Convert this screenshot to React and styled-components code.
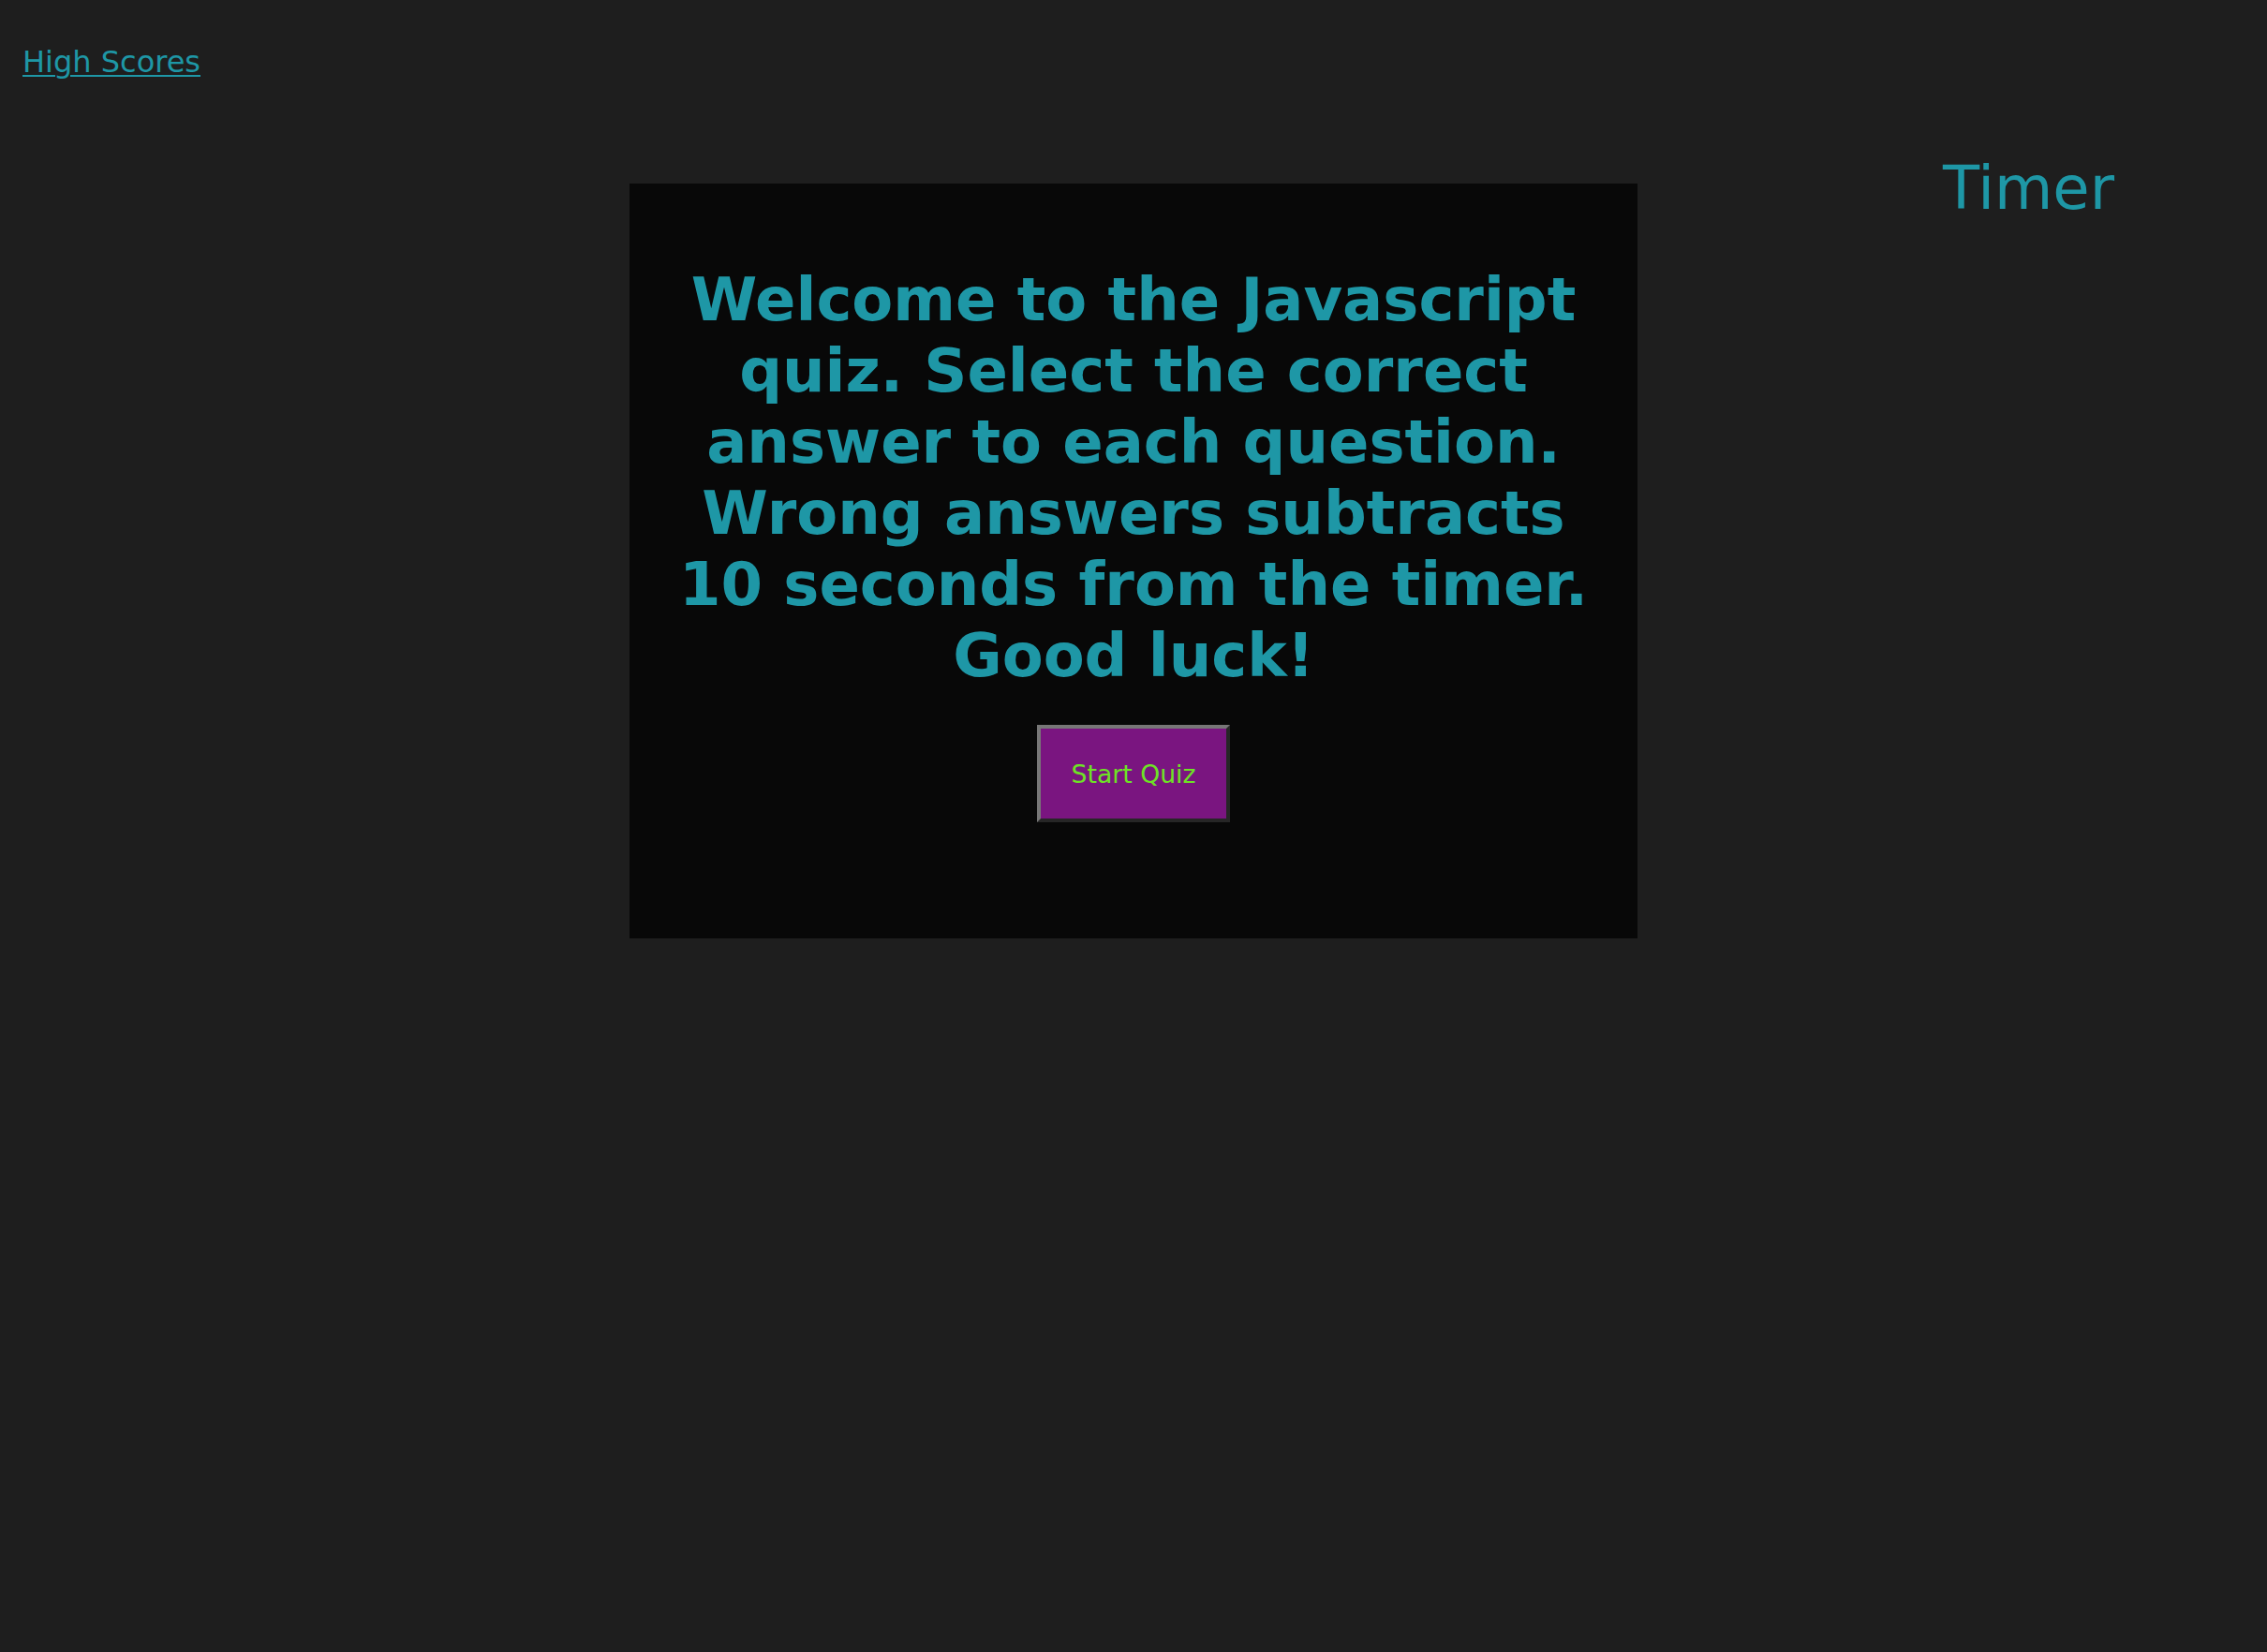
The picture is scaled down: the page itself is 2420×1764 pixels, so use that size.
import React from "react";
import styled, { createGlobalStyle } from "styled-components";

const Global = createGlobalStyle`
  html, body { margin: 0; padding: 0; background: #1e1e1e; }
  body { font-family: "DejaVu Sans", Verdana, sans-serif; min-height: 1764px; }
`;

const Page = styled.div`
  min-height: 1764px;
  background: #1e1e1e;
  color: #1e97a6;
`;

const Header = styled.header`
  padding: 48px 0 0 24px;
  line-height: 37px;
`;

const ScoresLink = styled.a`
  font-size: 32px;
  color: #1e97a6;
  text-decoration: underline;
  text-decoration-thickness: 2px;
  text-underline-offset: 3px;
  cursor: pointer;
`;

const Main = styled.main`
  display: grid;
  grid-template-columns: 1fr 1076px 1fr;
  margin-top: 74px;
`;

const Side = styled.div``;

const TimerCol = styled.div`
  padding-left: 326px;
`;

const Timer = styled.div`
  font-size: 64px;
  line-height: 74px;
  color: #1e97a6;
  white-space: nowrap;
`;

const Card = styled.section`
  margin-top: 32px;
  background: #080808;
  padding: 86px 50px 124px;
  display: flex;
  flex-direction: column;
  align-items: center;
`;

const Heading = styled.h1`
  margin: 0;
  font-size: 64px;
  line-height: 76px;
  font-weight: bold;
  text-align: center;
  color: #1e97a6;
`;

const StartButton = styled.button`
  margin-top: 36px;
  width: 206px;
  height: 104px;
  box-sizing: border-box;
  background: #7a1580;
  color: #6ee324;
  font-family: "DejaVu Sans", Verdana, sans-serif;
  font-size: 26.67px;
  border-style: solid;
  border-width: 4px;
  border-color: #777777 #262626 #262626 #777777;
  cursor: pointer;
  padding: 0;
`;

export default function App() {
  return (
    <>
      <Global />
      <Page>
        <Header>
          <ScoresLink>High Scores</ScoresLink>
        </Header>
        <Main>
          <Side />
          <Card>
            <Heading>
              Welcome to the Javascript quiz. Select the correct answer to each
              question. Wrong answers subtracts 10 seconds from the timer. Good
              luck!
            </Heading>
            <StartButton>Start Quiz</StartButton>
          </Card>
          <TimerCol>
            <Timer>Timer</Timer>
          </TimerCol>
        </Main>
      </Page>
    </>
  );
}
